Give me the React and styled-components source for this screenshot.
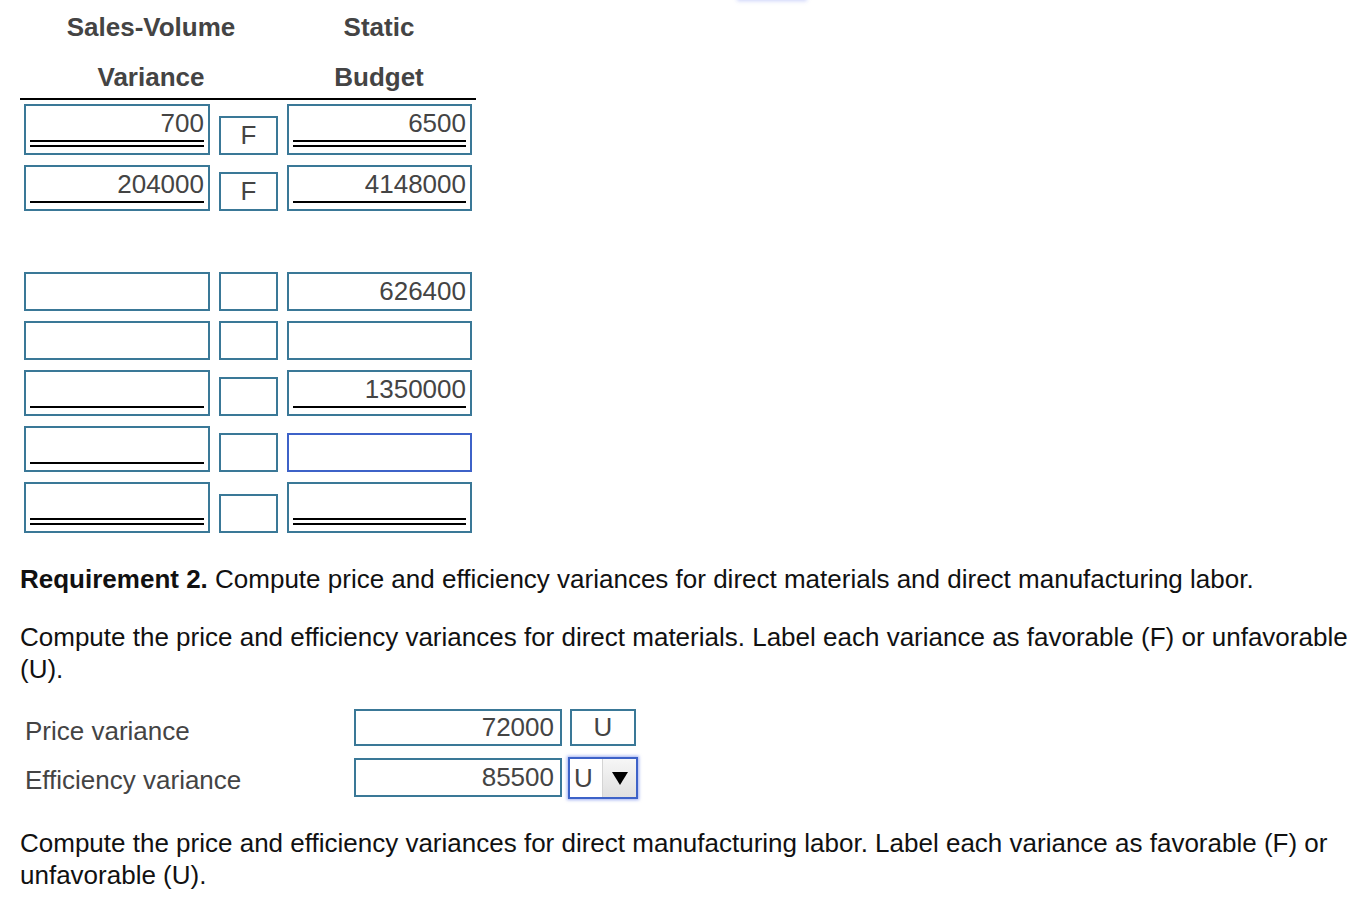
import React from 'react';
import styled, { createGlobalStyle, css } from 'styled-components';

const GlobalStyle = createGlobalStyle`
  html, body {
    margin: 0;
    padding: 0;
    background: #fff;
  }
  body {
    font-family: "Liberation Sans", Arial, Helvetica, sans-serif;
    font-size: 26px;
    color: #000;
  }
`;

const Page = styled.div`
  position: relative;
  padding: 0 0 0 20px;
  width: 1362px;
  box-sizing: border-box;
`;

const TopGlow = styled.div`
  position: absolute;
  top: -40px;
  left: 738px;
  width: 68px;
  height: 40px;
  box-shadow: 0 0 4px 1px rgba(110, 130, 240, 0.35);
`;

const Table = styled.div`
  width: 456px;
`;

const HeaderRow = styled.div`
  display: grid;
  grid-template-columns: 262px 194px;
  border-bottom: 2px solid #000;
`;

const HeaderCell = styled.div`
  font-weight: bold;
  color: #444;
  text-align: center;
`;

const HeadLine = styled.div`
  line-height: ${(p) => p.$h}px;
  height: ${(p) => p.$h}px;
  margin-top: ${(p) => p.$mt || 0}px;
`;

const Rows = styled.div`
  display: flex;
  flex-direction: column;
  gap: 10px;
  padding: 4px 4px 0;
`;

const Row = styled.div`
  display: flex;
  align-items: flex-end;
  gap: 9px;
  min-height: ${(p) => p.$min || 0}px;
`;

const Field = styled.div`
  box-sizing: border-box;
  width: ${(p) => p.$w}px;
  border: 2px solid ${(p) => (p.$focus ? '#3d62c8' : '#3a7897')};
  padding: 2px 4px 0;
  color: #444;
  text-align: right;
  ${(p) =>
    !p.$line &&
    css`
      padding-bottom: 3px;
    `}
`;

const FieldText = styled.div`
  line-height: 30px;
  height: 30px;
  white-space: nowrap;
`;

const Rule = styled.div`
  margin: 2px 0 6px;
  ${(p) =>
    p.$double
      ? css`
          border-top: 2px solid #000;
          border-bottom: 2px solid #000;
          height: 3px;
        `
      : css`
          border-top: 2px solid #000;
        `}
`;

const MarkBox = styled.div`
  box-sizing: border-box;
  width: 59px;
  height: 39px;
  border: 2px solid #3a7897;
  color: #444;
  text-align: center;
  line-height: 35px;
`;

const Para = styled.p`
  margin: ${(p) => p.$mt}px 0 0;
  line-height: 32px;
  color: #111;
`;

const Answers = styled.div`
  display: grid;
  grid-template-columns: 329px 208px auto;
  grid-template-rows: 37px 40px;
  align-items: start;
  row-gap: 12px;
  margin-top: 24px;
  padding-left: 5px;
`;

const Label = styled.div`
  color: #444;
  line-height: 37px;
  padding-top: 4px;
`;

const AnswerInput = styled.div`
  box-sizing: border-box;
  height: ${(p) => p.$h}px;
  border: 2px solid #3a7897;
  color: #444;
  text-align: right;
  padding-right: 6px;
  line-height: ${(p) => p.$h - 4}px;
`;

const AnswerMark = styled.div`
  box-sizing: border-box;
  width: 66px;
  height: 37px;
  margin-left: 8px;
  border: 2px solid #3a7897;
  color: #444;
  text-align: center;
  line-height: 33px;
`;

const Select = styled.div`
  box-sizing: border-box;
  display: flex;
  width: 70px;
  height: 42px;
  margin: -1px 0 0 6px;
  border: 2px solid #3d62c8;
  box-shadow: 0 0 3px 1px rgba(80, 110, 230, 0.55);
  color: #444;
  background: #fff;
`;

const SelectValue = styled.div`
  flex: 1;
  padding-left: 4px;
  line-height: 38px;
`;

const SelectArrow = styled.div`
  width: 33px;
  display: flex;
  align-items: center;
  justify-content: center;
  background: linear-gradient(#f6f6f6, #e0e0e0);
  border-left: 1px solid #d4d4d4;
`;

const rows = [
  { a: '700', m: 'F', b: '6500', line: 'double' },
  { a: '204000', m: 'F', b: '4148000', line: 'single' },
  null,
  { a: '', m: '', b: '626400' },
  { a: '', m: '', b: '' },
  { a: '', m: '', b: '1350000', line: 'single' },
  { a: '', m: '', b: '', line: 'single', bPlain: true, bFocus: true },
  { a: '', m: '', b: '', line: 'double' },
];

const Cell = ({ w, value, line, focus }) => (
  <Field $w={w} $line={!!line} $focus={focus}>
    <FieldText>{value}</FieldText>
    {line && <Rule $double={line === 'double'} />}
  </Field>
);

const App = () => (
  <Page>
    <GlobalStyle />
    <TopGlow />
    <Table>
      <HeaderRow>
        <HeaderCell>
          <HeadLine $h={48} $mt={3}>Sales-Volume</HeadLine>
          <HeadLine $h={42} $mt={5}>Variance</HeadLine>
        </HeaderCell>
        <HeaderCell>
          <HeadLine $h={48} $mt={3}>Static</HeadLine>
          <HeadLine $h={42} $mt={5}>Budget</HeadLine>
        </HeaderCell>
      </HeaderRow>
      <Rows>
        {rows.map((r, i) =>
          r ? (
            <Row key={i}>
              <Cell w={186} value={r.a} line={r.line} />
              <MarkBox>{r.m}</MarkBox>
              <Cell
                w={185}
                value={r.b}
                line={r.bPlain ? null : r.line}
                focus={r.bFocus}
              />
            </Row>
          ) : (
            <Row key={i} $min={41} />
          )
        )}
      </Rows>
    </Table>

    <Para $mt={30}>
      <b>Requirement 2.</b> Compute price and efficiency variances for direct
      materials and direct manufacturing labor.
    </Para>
    <Para $mt={26}>
      Compute the price and efficiency variances for direct materials. Label
      each variance as favorable (F) or unfavorable (U).
    </Para>

    <Answers>
      <Label>Price variance</Label>
      <AnswerInput $h={37}>72000</AnswerInput>
      <AnswerMark>U</AnswerMark>
      <Label>Efficiency variance</Label>
      <AnswerInput $h={39}>85500</AnswerInput>
      <Select>
        <SelectValue>U</SelectValue>
        <SelectArrow>
          <svg width="16" height="13" viewBox="0 0 16 13">
            <path d="M0 0 H16 L8 13 Z" fill="#000" />
          </svg>
        </SelectArrow>
      </Select>
    </Answers>

    <Para $mt={29}>
      Compute the price and efficiency variances for direct manufacturing
      labor. Label each variance as favorable (F) or unfavorable (U).
    </Para>
  </Page>
);

export default App;
